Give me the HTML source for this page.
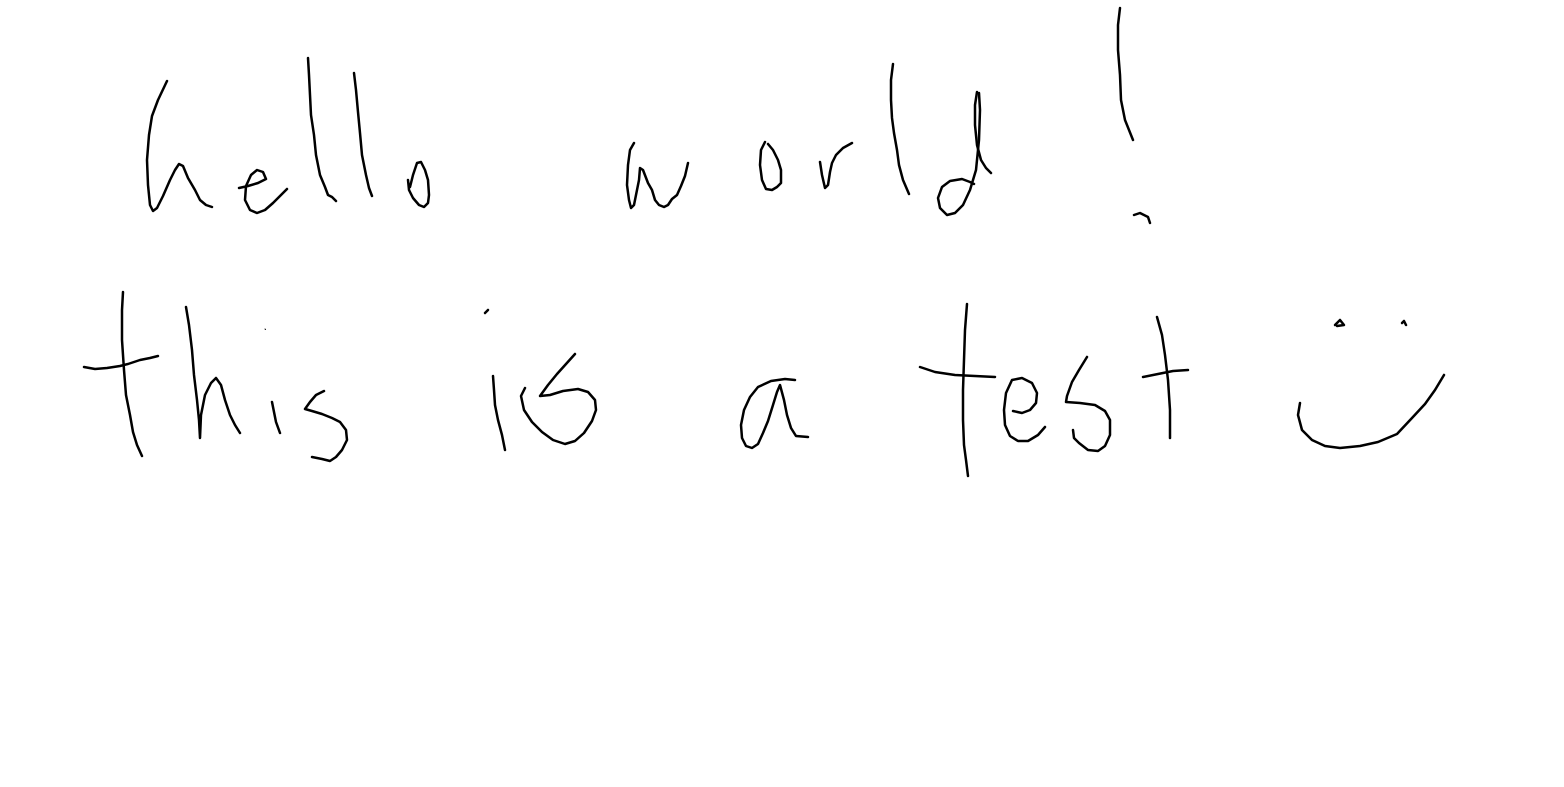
<!DOCTYPE html>
<html><head><meta charset="utf-8"><style>
html,body{margin:0;padding:0;background:#fff;width:1564px;height:787px;overflow:hidden}
svg{display:block}
.sr{position:absolute;left:-9999px}
</style></head><body>
<span class="sr">hello world! this is a test</span>
<svg width="1564" height="787" viewBox="0 0 1564 787" fill="none" stroke="#000" stroke-width="2.5" stroke-linecap="round" stroke-linejoin="round">
<polyline points="167,81 158,100 152,116 149,135 147,160 148,185 150,205 153,211 157,208 163,196 170,180 175,170 179,164 183,166 188,178 195,190 200,200 206,205 212,207"/>
<polyline points="239,188 248,186 258,183 266,179 263,172 257,170 251,175 246,186 245,200 250,210 257,213 265,210 273,203 281,195 287,189"/>
<polyline points="308,58 309,75 310,95 311,115 314,135 316,155 320,175 325,187 328,195 332,197 336,201"/>
<polyline points="354,73 356,90 358,112 360,133 362,155 366,175 369,188 372,196"/>
<polyline points="410,187 413,175 417,163 421,162 425,170 428,180 429,195 428,203 424,207 419,205 413,198 409,190 408,180"/>
<polyline points="634,143 630,150 628,165 627,185 629,200 631,208 634,205 637,190 639,180 640,168 643,170 648,183 652,190 655,200 659,205 664,207 668,205 672,199 677,195 681,186 685,176 688,163"/>
<polyline points="765,142 761,150 760,165 762,180 766,189 772,190 777,187 781,183 781,170 778,160 773,150 768,144"/>
<polyline points="820,162 822,175 825,188 828,185 830,172 832,163 836,155 843,148 852,143"/>
<polyline points="893,64 891,80 891,100 892,118 894,133 897,150 899,165 903,180 909,194"/>
<polyline points="977,92 975,105 975,125 977,145 981,160 986,168 991,173"/>
<polyline points="979,93 980,110 979,140 976,170 970,190 963,205 955,213 947,215 940,208 938,198 942,187 950,181 962,179 970,182 974,184"/>
<polyline points="1120,8 1118,25 1118,50 1120,75 1121,100 1125,120 1133,140"/>
<polyline points="1134,215 1140,213 1148,217 1150,223"/>
<polyline points="123,292 122,310 122,340 124,370 126,395 130,415 133,432 137,445 142,456"/>
<polyline points="84,367 95,369 107,368 120,366 128,364 140,360 150,358 158,356"/>
<polyline points="186,307 189,325 192,350 194,375 197,400 199,420 200,438 201,415 205,395 211,383 216,378 221,385 225,400 230,415 235,425 240,433"/>
<polyline points="265,329 265.5,329.5" stroke-width="1"/>
<polyline points="272,402 274,412 276,422 280,433"/>
<polyline points="324,391 316,395 310,402 305,409 312,411 322,414 332,418 340,422 346,430 347,440 342,450 336,457 330,461 322,459 312,457"/>
<polyline points="485,313 488,310"/>
<polyline points="493,376 494,390 495,405 498,420 502,435 505,450"/>
<polyline points="525,388 521,396 524,410 532,422 542,432 553,440 565,444 575,441 584,433 592,421 596,410 595,400 588,392 578,389 563,391 550,395 540,396 548,385 557,374 566,364 575,354"/>
<polyline points="795,380 785,379 771,381 758,387 750,397 744,410 741,425 742,438 746,446 752,448 758,444 763,433 768,421 773,405 777,392 780,385 784,400 787,415 791,428 796,436 808,437"/>
<polyline points="920,367 935,372 955,375 975,376 995,377"/>
<polyline points="967,304 965,330 964,360 963,390 963,420 964,445 966,460 968,476"/>
<polyline points="1013,411 1022,413 1030,410 1036,403 1037,393 1032,383 1022,378 1012,380 1006,393 1004,410 1005,425 1010,436 1018,441 1028,441 1038,435 1045,427"/>
<polyline points="1087,357 1079,370 1072,382 1067,396 1066,402 1080,403 1095,405 1105,411 1110,420 1110,435 1105,446 1098,451 1088,450 1079,443 1074,438 1073,430"/>
<polyline points="1157,317 1162,335 1165,355 1168,380 1170,410 1170,438"/>
<polyline points="1143,377 1158,374 1173,371 1188,370"/>
<polyline points="1335,325 1340,320 1344,325 1337,326"/>
<polyline points="1402,323 1404,321 1406,325"/>
<polyline points="1300,403 1298,415 1302,430 1312,440 1325,446 1340,448 1360,446 1378,442 1397,434 1412,418 1425,404 1435,390 1444,375"/>
</svg>
</body></html>
